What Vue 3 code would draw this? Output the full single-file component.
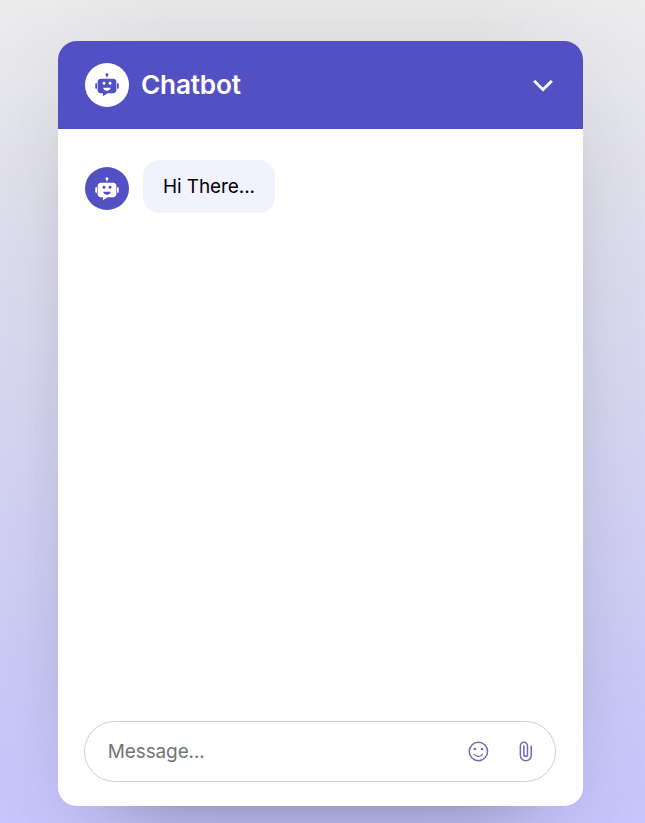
<script setup>
import { ref } from 'vue'

const robot =
  'M738.3 287.6H285.7c-59 0-106.8 47.8-106.8 106.8v303.1c0 59 47.8 106.8 106.8 106.8h81.5v111.1c0 .7.8 1.1 1.4.7l166.9-110.6 41.8-.8h117.4l43.6-.4c59 0 106.8-47.8 106.8-106.8V394.5c0-59-47.8-106.9-106.8-106.9zM351.7 448.2c0-29.5 23.9-53.5 53.5-53.5s53.5 23.9 53.5 53.5-23.9 53.5-53.5 53.5-53.5-23.9-53.5-53.5zm157.9 267.1c-67.8 0-123.8-47.5-132.3-109h264.6c-8.6 61.5-64.5 109-132.3 109zm110-213.7c-29.5 0-53.5-23.9-53.5-53.5s23.9-53.5 53.5-53.5 53.5 23.9 53.5 53.5-23.9 53.5-53.5 53.5zM867.2 644.5V453.1h26.5c19.4 0 35.1 15.7 35.1 35.1v121.1c0 19.4-15.7 35.1-35.1 35.1h-26.5zM95.2 609.4V488.2c0-19.4 15.7-35.1 35.1-35.1h26.5v191.3h-26.5c-19.4 0-35.1-15.7-35.1-35.1zM561.5 149.6c0 23.4-15.6 43.3-36.9 49.7v44.9h-30v-44.9c-21.4-6.5-36.9-26.3-36.9-49.7 0-28.6 23.3-51.9 51.9-51.9s51.9 23.3 51.9 51.9z'

const messages = ref([{ id: 1, text: 'Hi There...' }])
const draft = ref('')
</script>

<template>
  <main class="page">
    <section class="popup">
      <header class="header">
        <div class="brand">
          <span class="avatar avatar-light">
            <svg viewBox="-21 -21 1066 1066"><path :d="robot" /></svg>
          </span>
          <h2 class="title">Chatbot</h2>
        </div>
        <button class="toggle" type="button">
          <svg viewBox="0 -960 960 960">
            <path d="M480-345 240-585l43-43 197 198 197-197 43 43-240 239Z" />
          </svg>
        </button>
      </header>

      <div class="body">
        <div v-for="m in messages" :key="m.id" class="message">
          <span class="avatar avatar-dark">
            <svg viewBox="-21 -21 1066 1066"><path :d="robot" /></svg>
          </span>
          <p class="bubble">{{ m.text }}</p>
        </div>
      </div>

      <footer class="footer">
        <form class="form" @submit.prevent>
          <input v-model="draft" class="input" type="text" placeholder="Message..." />
          <button class="action" type="button">
            <svg viewBox="19 -945 970 970">
              <circle class="line" cx="480" cy="-480" r="370" />
              <circle class="dot" cx="626" cy="-580" r="54" />
              <circle class="dot" cx="334" cy="-580" r="54" />
              <path class="dot" d="M480-261q66 0 121.500-35.500T682-393h-52q-23 40-63 61.500T480.500-310q-46.500 0-87-21T331-393h-53q26 61 81 96.500T480-261Z" />
            </svg>
          </button>
          <button class="action" type="button">
            <svg viewBox="0 -945 970 970">
              <path class="line" d="M698-720v395a220 220 0 0 1-440 0V-707a143 143 0 0 1 286 0v350a73 73 0 0 1-146 0V-720" />
            </svg>
          </button>
        </form>
      </footer>
    </section>
  </main>
</template>

<style>
body {
  margin: 0;
  overflow: hidden;
}
</style>

<style scoped>
* {
  box-sizing: border-box;
}
.page {
  height: 823px;
  padding: 41px 62px 0 58px;
  overflow: hidden;
  font-family: Inter, sans-serif;
  background: linear-gradient(#eeeeee, #c8c7ff);
}
.popup {
  display: flex;
  flex-direction: column;
  height: 765px;
  overflow: hidden;
  border-radius: 18.75px;
  background: #fff;
  box-shadow:
    0 0 160px 0 rgba(0, 0, 0, 0.1),
    0 40px 80px -60px rgba(0, 0, 0, 0.5);
}
.header {
  display: flex;
  align-items: center;
  justify-content: space-between;
  height: 88px;
  padding: 0 21px 0 27px;
  background: #5350c4;
}
.brand {
  display: flex;
  align-items: center;
  gap: 12px;
}
.avatar {
  display: flex;
  align-items: center;
  justify-content: center;
  width: 44px;
  height: 44px;
  border-radius: 50%;
  flex-shrink: 0;
}
.avatar svg {
  width: 30px;
  height: 30px;
}
.avatar-light {
  background: #fff;
  fill: #5350c4;
}
.avatar-dark {
  height: 43px;
  background: #5350c4;
  fill: #fff;
}
.title {
  margin: 0;
  font-size: 26.2px;
  line-height: 32px;
  font-weight: 600;
  letter-spacing: -0.22px;
  color: #fff;
}
button {
  display: flex;
  align-items: center;
  justify-content: center;
  padding: 0;
  border: 0;
  background: none;
}
.toggle svg {
  width: 38px;
  height: 38px;
  margin-top: 1.5px;
  fill: #fff;
  stroke: #fff;
  stroke-width: 16;
  stroke-linejoin: round;
}
.body {
  flex: 1;
  padding: 31px 27px;
}
.message {
  display: flex;
  align-items: flex-end;
  gap: 14px;
}
.message .avatar {
  margin-bottom: 3px;
}
.bubble {
  margin: 0;
  padding: 15px 20px;
  border-radius: 16.25px;
  background: #f2f2ff;
  color: #000;
  font-size: 19px;
  line-height: 23px;
  letter-spacing: -0.1px;
}
.footer {
  padding: 0 27px 24px 26px;
}
.form {
  display: flex;
  align-items: center;
  height: 61px;
  padding: 0 17px 0 22.75px;
  border: 1px solid #cccce5;
  border-radius: 40px;
}
.input {
  flex: 1;
  min-width: 0;
  height: 58px;
  padding: 0;
  border: 0;
  outline: 0;
  background: none;
  font-family: inherit;
  font-size: 19px;
  letter-spacing: -0.12px;
}
.input::placeholder {
  color: #757575;
}
.action {
  width: 24px;
  height: 24px;
}
.action + .action {
  margin-left: 23px;
}
.action svg {
  width: 24px;
  height: 24px;
}
.line {
  fill: none;
  stroke: #706db0;
  stroke-width: 62;
}
.dot {
  fill: #706db0;
}
</style>
